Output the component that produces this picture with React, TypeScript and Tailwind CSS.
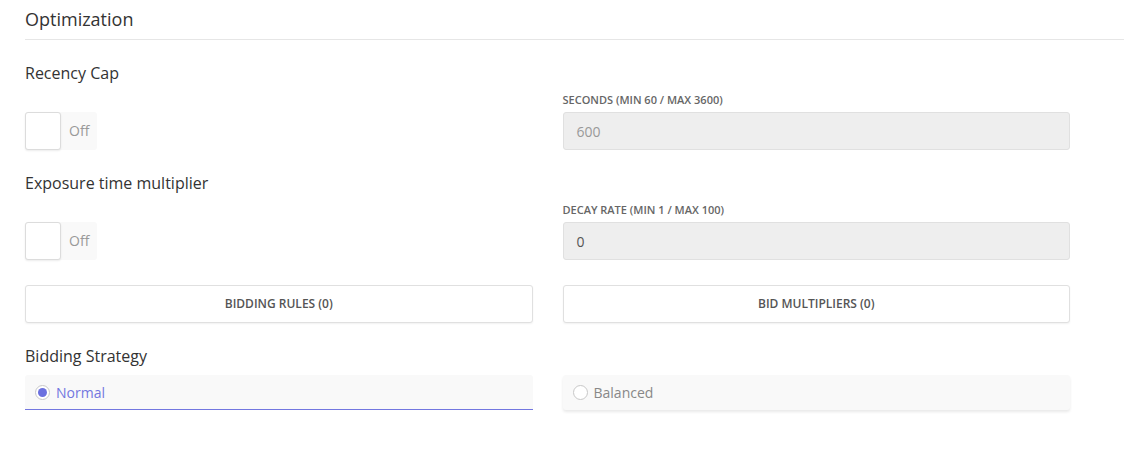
import type { ReactNode } from 'react';

const font = { fontFamily: '"Open Sans", "Liberation Sans", sans-serif' };

const Toggle = () => (
    <div className="flex h-[38px] w-[72px] items-center rounded-[3px] bg-[#f9f9f9]">
        <div className="h-[38px] w-[36px] rounded-[3px] border border-[#dcdcdc] bg-white shadow-[0_1px_2px_rgba(0,0,0,0.08)]" />
        <span className="ml-[8px] text-[14px] leading-[20px] text-[#999]">Off</span>
    </div>
);

const Field = ({ label, value, muted }: { label: string; value: string; muted?: boolean }) => (
    <div>
        <div className="mb-[5px] text-[11px] font-semibold uppercase leading-[14px] text-[#666]">{label}</div>
        <div
            className={`flex h-[38px] items-center rounded-[3px] border border-[#e0e0e0] bg-[#eeeeee] px-[13px] text-[14px] ${
                muted ? 'text-[#999]' : 'text-[#555]'
            }`}
        >
            {value}
        </div>
    </div>
);

const Heading = ({ children, className = '' }: { children: ReactNode; className?: string }) => (
    <div className={`text-[16px] leading-[22px] text-[#333] ${className}`}>{children}</div>
);

const ActionButton = ({ children }: { children: ReactNode }) => (
    <button className="flex h-[38px] w-full items-center justify-center rounded-[3px] border border-[#e0e0e0] bg-white text-[12px] font-semibold uppercase text-[#555] shadow-[0_1px_2px_rgba(0,0,0,0.06)]">
        {children}
    </button>
);

export default function App() {
    return (
        <div className="min-h-[452px] bg-white pl-[25px]" style={font}>
            <div className="border-b border-[#e6e6e6] pt-[7px] pb-[8px] text-[18px] leading-[24px] text-[#333]">
                Optimization
            </div>

            <div className="w-[1045px]">
                <Heading className="mt-[22px]">Recency Cap</Heading>
                <div className="mt-[9px] grid grid-cols-2 items-end gap-x-[30px]">
                    <Toggle />
                    <Field label="Seconds (min 60 / max 3600)" value="600" muted />
                </div>

                <Heading className="mt-[22px]">Exposure time multiplier</Heading>
                <div className="mt-[9px] grid grid-cols-2 items-end gap-x-[30px]">
                    <Toggle />
                    <Field label="Decay rate (min 1 / max 100)" value="0" />
                </div>

                <div className="mt-[25px] grid grid-cols-2 gap-x-[30px]">
                    <ActionButton>Bidding Rules (0)</ActionButton>
                    <ActionButton>Bid Multipliers (0)</ActionButton>
                </div>

                <Heading className="mt-[22px]">Bidding Strategy</Heading>
                <div className="mt-[8px] grid grid-cols-2 gap-x-[30px]">
                    <label className="flex h-[35px] items-center rounded-t-[3px] border-b border-[#7377e0] bg-[#f9f9f9] pl-[10px] text-[14px] text-[#7377e0]">
                        <span className="flex h-[15px] w-[15px] items-center justify-center rounded-full border border-[#c8c8c8] bg-white">
                            <span className="h-[9px] w-[9px] rounded-full bg-[#6b70df]" />
                        </span>
                        <span className="ml-[6px]">Normal</span>
                    </label>
                    <label className="flex h-[35px] items-center rounded-[3px] bg-[#f9f9f9] pl-[10px] text-[14px] text-[#888] shadow-[0_2px_3px_rgba(0,0,0,0.09)]">
                        <span className="h-[15px] w-[15px] rounded-full border border-[#c8c8c8] bg-white" />
                        <span className="ml-[6px]">Balanced</span>
                    </label>
                </div>
            </div>
        </div>
    );
}
